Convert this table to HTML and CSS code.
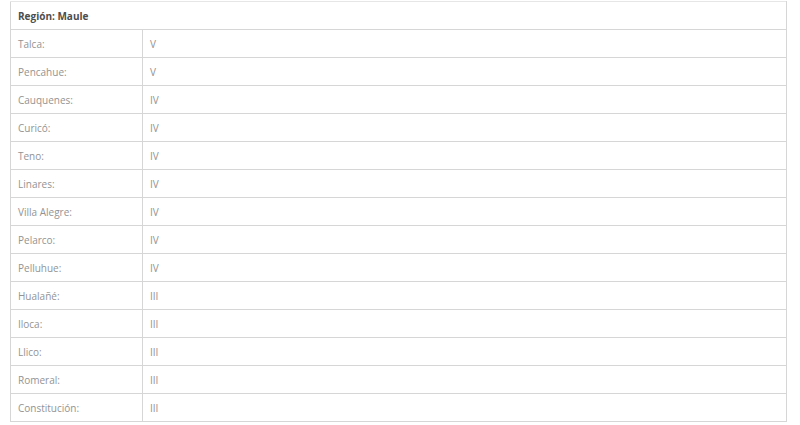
FILE: index.html
```html
<!DOCTYPE html>
<html lang="es">
<head>
<meta charset="utf-8">
<link rel="stylesheet" href="styles.css">
</head>
<body>
<table class="tabla">
  <colgroup>
    <col class="col-lugar">
    <col class="col-valor">
  </colgroup>
  <thead>
    <tr><th colspan="2">Región: Maule</th></tr>
  </thead>
  <tbody>
    <tr><td>Talca:</td><td>V</td></tr>
    <tr><td>Pencahue:</td><td>V</td></tr>
    <tr><td>Cauquenes:</td><td>IV</td></tr>
    <tr><td>Curicó:</td><td>IV</td></tr>
    <tr><td>Teno:</td><td>IV</td></tr>
    <tr><td>Linares:</td><td>IV</td></tr>
    <tr><td>Villa Alegre:</td><td>IV</td></tr>
    <tr><td>Pelarco:</td><td>IV</td></tr>
    <tr><td>Pelluhue:</td><td>IV</td></tr>
    <tr><td>Hualañé:</td><td>III</td></tr>
    <tr><td>Iloca:</td><td>III</td></tr>
    <tr><td>Llico:</td><td>III</td></tr>
    <tr><td>Romeral:</td><td>III</td></tr>
    <tr><td>Constitución:</td><td>III</td></tr>
  </tbody>
</table>
</body>
</html>
```

FILE: styles.css
```css
html, body {
  margin: 0;
  padding: 0;
  background: #ffffff;
}
body {
  padding: 1px 0 0 10px;
  font-family: "Open Sans", "Noto Sans", sans-serif;
}
.tabla {
  width: 777px;
  border-collapse: collapse;
  table-layout: fixed;
}
.col-lugar {
  width: 132px;
}
.tabla th,
.tabla td {
  border: 1px solid #d6d6d6;
  height: 28px;
  padding: 0 0 0 7px;
  text-align: left;
  vertical-align: middle;
  font-size: 10px;
  line-height: 14px;
  box-sizing: border-box;
}
.tabla th {
  font-weight: 700;
  color: #4d4d4d;
  border-top-color: #e6e6e6;
}
.tabla td {
  color: #939393;
  font-weight: 400;
}
```
